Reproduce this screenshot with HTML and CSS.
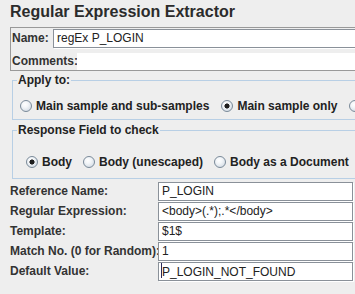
FILE: index.html
```html
<!DOCTYPE html>
<html lang="en">
<head>
    <meta charset="UTF-8">
    <title>Regular Expression Extractor</title>
    <link rel="stylesheet" href="styles.css">
</head>
<body>

<h1 class="title">Regular Expression Extractor</h1>

<!-- Name / Comments -->
<div class="name-panel">
    <div class="name-row">
        <span class="label">Name:</span>
        <div class="field name-field">regEx P_LOGIN</div>
    </div>
    <div class="comments-row">
        <span class="label">Comments:</span>
        <div class="comments-area"></div>
    </div>
</div>

<!-- Apply to -->
<fieldset class="group">
    <legend>Apply to:</legend>
    <div class="radio-row apply-row">
        <span class="option"><span class="radio"></span>Main sample and sub-samples</span>
        <span class="option"><span class="radio on"></span>Main sample only</span>
        <span class="option"><span class="radio"></span></span>
    </div>
</fieldset>

<!-- Response field -->
<fieldset class="group response-group">
    <legend>Response Field to check</legend>
    <div class="radio-row response-row">
        <span class="option"><span class="radio on"></span>Body</span>
        <span class="option"><span class="radio"></span>Body (unescaped)</span>
        <span class="option"><span class="radio"></span>Body as a Document</span>
    </div>
</fieldset>

<!-- Extractor settings -->
<div class="form">
    <span class="label">Reference Name:</span>
    <div class="field">P_LOGIN</div>

    <span class="label">Regular Expression:</span>
    <div class="field">&lt;body&gt;(.*);.*&lt;/body&gt;</div>

    <span class="label">Template:</span>
    <div class="field">$1$</div>

    <span class="label">Match No. (0 for Random):</span>
    <div class="field">1</div>

    <span class="label">Default Value:</span>
    <div class="field"><span class="caret"></span>P_LOGIN_NOT_FOUND</div>
</div>

</body>
</html>
```

FILE: styles.css
```css
html, body {
    overflow: hidden;
}
body {
    margin: 0;
    background-color: #eeeeee;
    font-family: "Liberation Sans", Arial, sans-serif;
    font-size: 12px;
    color: #333333;
}
.title {
    margin: 0;
    padding: 3px 0 0 10px;
    font-size: 16px;
    line-height: 18px;
    font-weight: bold;
    color: #2b2b2b;
}
.label {
    font-weight: bold;
    white-space: nowrap;
}

/* name / comments box */
.name-panel {
    margin: 6px -20px 0 10px;
    border: 1px solid #999999;
    border-right: none;
    padding: 1px 0 0 1px;
}
.name-row {
    display: flex;
    height: 20px;
}
.name-row .label {
    width: 41px;
    line-height: 19px;
}
.comments-row {
    display: flex;
    height: 17px;
    margin-top: 4px;
}
.comments-row .label {
    width: 65px;
    line-height: 17px;
}
.comments-area {
    flex: 1;
    background-color: #ffffff;
}
.name-field {
    flex: 1;
}

/* text fields */
.field {
    box-sizing: border-box;
    height: 19px;
    border: 1px solid #8a9199;
    box-shadow: 1px 1px 0 #ffffff;
    background-color: #ffffff;
    padding: 0 3px;
    line-height: 17px;
    color: #222222;
    white-space: nowrap;
    overflow: hidden;
}
.caret {
    display: inline-block;
    width: 1px;
    height: 15px;
    margin-left: -1px;
    vertical-align: -2px;
    background-color: #2a2a5a;
}

/* titled groups */
.group {
    margin: 2px -20px 0 12px;
    padding: 0;
    border: 1px solid #b8cfe5;
    border-right: none;
    min-width: 0;
}
.response-group {
    margin-top: 3px;
}
.group legend {
    margin-left: 4px;
    padding: 0 1px;
    font-weight: bold;
    line-height: 15px;
    color: #222222;
}
.radio-row {
    display: flex;
    align-items: center;
    white-space: nowrap;
    font-weight: bold;
    color: #222222;
}
.apply-row {
    height: 27px;
    padding: 4px 0 0 7px;
}
.response-row {
    height: 32px;
    padding: 8px 0 0 13px;
}
.option {
    display: inline-flex;
    align-items: center;
    margin-right: 12px;
}
.response-row .option {
    margin-right: 11px;
}
.radio {
    flex: none;
    box-sizing: border-box;
    width: 12px;
    height: 12px;
    margin-right: 4px;
    border: 1px solid #7a8a99;
    border-radius: 50%;
    background: radial-gradient(circle at 40% 35%, #ffffff 0, #f2f5f8 35%, #c9d3de 100%);
}
.radio.on {
    background: radial-gradient(circle, #1e1e1e 0, #1e1e1e 2.2px, transparent 2.9px),
                radial-gradient(circle at 40% 35%, #ffffff 0, #f2f5f8 35%, #c9d3de 100%);
}

/* extractor settings */
.form {
    display: grid;
    grid-template-columns: 148px 1fr;
    grid-auto-rows: 20px;
    margin: 3px 2px 0 10px;
}
.form .label {
    line-height: 19px;
}
```
